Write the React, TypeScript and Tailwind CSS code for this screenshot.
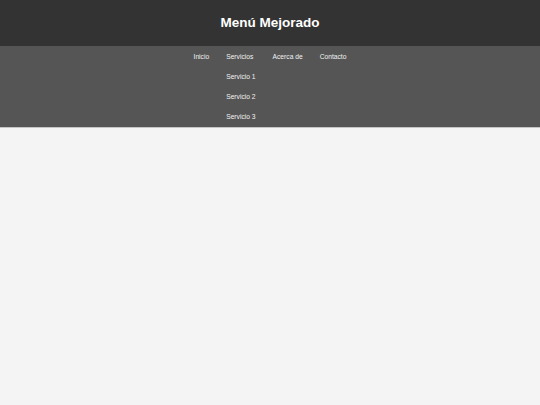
const MENU: { label: string; children?: string[] }[] = [
  { label: "Inicio" },
  { label: "Servicios", children: ["Servicio 1", "Servicio 2", "Servicio 3"] },
  { label: "Acerca de" },
  { label: "Contacto" },
];

export default function App() {
  return (
    <div className="min-h-[405px] bg-[#f4f4f4] font-['Liberation_Sans',Arial,sans-serif]">
      <header className="flex h-[46px] items-center justify-center bg-[#333333] text-[13.5px] font-bold text-white">
        <h1>Menú Mejorado</h1>
      </header>
      <nav className="bg-[#555555] pt-px shadow-[0_1px_0_#c4c4c4]">
        <ul className="flex justify-center gap-[17px]">
          {MENU.map((item) => (
            <li key={item.label} className="flex flex-col">
              <a className="block h-[20px] text-[6.7px] leading-[20px] text-[#f2f2f2]">
                {item.label}
              </a>
              {item.children?.map((child) => (
                <a
                  key={child}
                  className="block h-[20px] text-[6.7px] leading-[20px] text-[#f2f2f2]"
                >
                  {child}
                </a>
              ))}
            </li>
          ))}
        </ul>
      </nav>
    </div>
  );
}
